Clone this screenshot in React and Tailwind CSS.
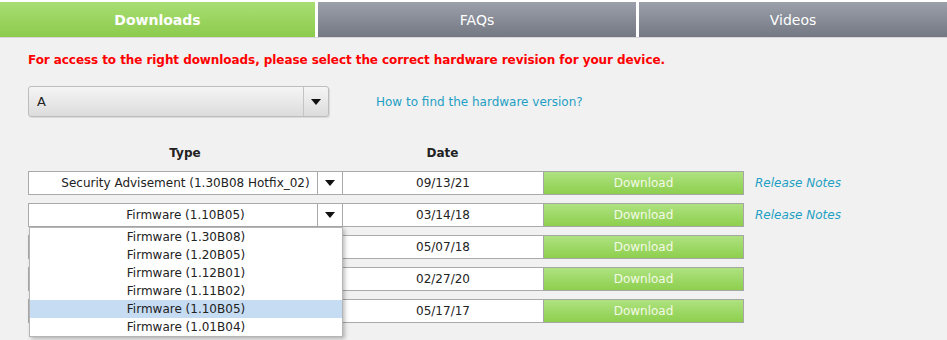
import { useState } from 'react';

const rows = [
  { type: 'Security Advisement (1.30B08 Hotfix_02)', date: '09/13/21', notes: true },
  { type: 'Firmware (1.10B05)', date: '03/14/18', notes: true, open: true },
  { type: 'Firmware (1.30B08)', date: '05/07/18', covered: true },
  { type: 'Firmware (1.20B05)', date: '02/27/20', covered: true },
  { type: 'Firmware (1.01B04)', date: '05/17/17', covered: true },
];

const firmwareList = [
  'Firmware (1.30B08)',
  'Firmware (1.20B05)',
  'Firmware (1.12B01)',
  'Firmware (1.11B02)',
  'Firmware (1.10B05)',
  'Firmware (1.01B04)',
];

const Arrow = () => (
  <svg width="10" height="6" viewBox="0 0 10 6">
    <path d="M0 0h10L5 6z" fill="#111" />
  </svg>
);

const App = () => {
  const [tab, setTab] = useState('Downloads');
  const [selected] = useState('Firmware (1.10B05)');

  const tabClass = (name) =>
    name === tab
      ? 'bg-gradient-to-b from-[#a9de73] to-[#8ccb4c] font-bold'
      : 'bg-gradient-to-b from-[#9ba0ab] to-[#747883]';

  return (
    <div className="min-h-[340px] bg-[#f1f1f1] text-[12px] text-[#222]" style={{ fontFamily: '"DejaVu Sans", Verdana, sans-serif' }}>
      <div className="flex gap-[3px] bg-white pt-[2px] border-b border-[#d6d6d6]">
        {['Downloads', 'FAQs', 'Videos'].map((name, i) => (
          <button
            key={name}
            onClick={() => setTab(name)}
            className={`h-[35px] pt-[2px] text-[14px] text-white ${i === 0 ? 'w-[315px]' : i === 1 ? 'w-[318px]' : 'flex-1'} ${tabClass(name)}`}
          >
            {name}
          </button>
        ))}
      </div>

      <div className="px-[28px]">
        <p className="mt-[15px] font-bold tracking-[-0.07px] text-[#ff0000] leading-[14px]">
          For access to the right downloads, please select the correct hardware revision for your device.
        </p>

        <div className="mt-[19px] flex items-center">
          <div className="flex h-[31px] w-[301px] items-center rounded-[3px] border border-[#bdbdbd] bg-gradient-to-b from-[#f5f5f5] to-[#dcdcdc] shadow-[1px_1px_1px_rgba(0,0,0,0.1)]">
            <span className="flex-1 pl-[8px] text-[13px]">A</span>
            <span className="flex h-full w-[25px] items-center justify-center border-l border-[#c4c4c4]">
              <Arrow />
            </span>
          </div>
          <a className="ml-[47px] text-[#1e9fc4]" href="#">How to find the hardware version?</a>
        </div>

        <div className="mt-[27px] flex font-bold">
          <span className="w-[314px] text-center">Type</span>
          <span className="w-[201px] text-center">Date</span>
        </div>

        <div className="mt-[9px] flex flex-col gap-[8px]">
          {rows.map((row) => (
            <div key={row.date} className="relative flex h-[24px] items-center">
              <div className="relative flex h-full w-[315px] items-center border border-[#aaaaaa] bg-white">
                <span className={`absolute inset-0 flex items-center justify-center whitespace-nowrap ${row.covered ? 'invisible' : ''}`}>
                  {row.open ? selected : row.type}
                </span>
                <span className="relative ml-auto flex h-full w-[25px] items-center justify-center border-l border-[#aaaaaa] bg-white">
                  <Arrow />
                </span>
              </div>
              <div className="-ml-px flex h-full w-[202px] items-center justify-center border border-[#aaaaaa] bg-white">
                {row.date}
              </div>
              <button className="-ml-px h-full w-[201px] border border-[#a6a6a6] bg-gradient-to-b from-[#aee27f] to-[#8dcf4d] text-[#f3fae6]">
                Download
              </button>
              {row.notes && (
                <a href="#" className="ml-[11px] italic text-[#1e9fc4]">Release Notes</a>
              )}
              {row.open && (
                <ul className="absolute left-[1px] top-full z-10 w-[314px] border border-[#b5b5b5] bg-white shadow-[2px_2px_4px_rgba(0,0,0,0.25)]">
                  {firmwareList.map((f) => (
                    <li key={f} className={`h-[18px] text-center leading-[18px] ${f === selected ? 'bg-[#c6dcf3]' : ''}`}>
                      {f}
                    </li>
                  ))}
                </ul>
              )}
            </div>
          ))}
        </div>
      </div>
    </div>
  );
};

export default App;
